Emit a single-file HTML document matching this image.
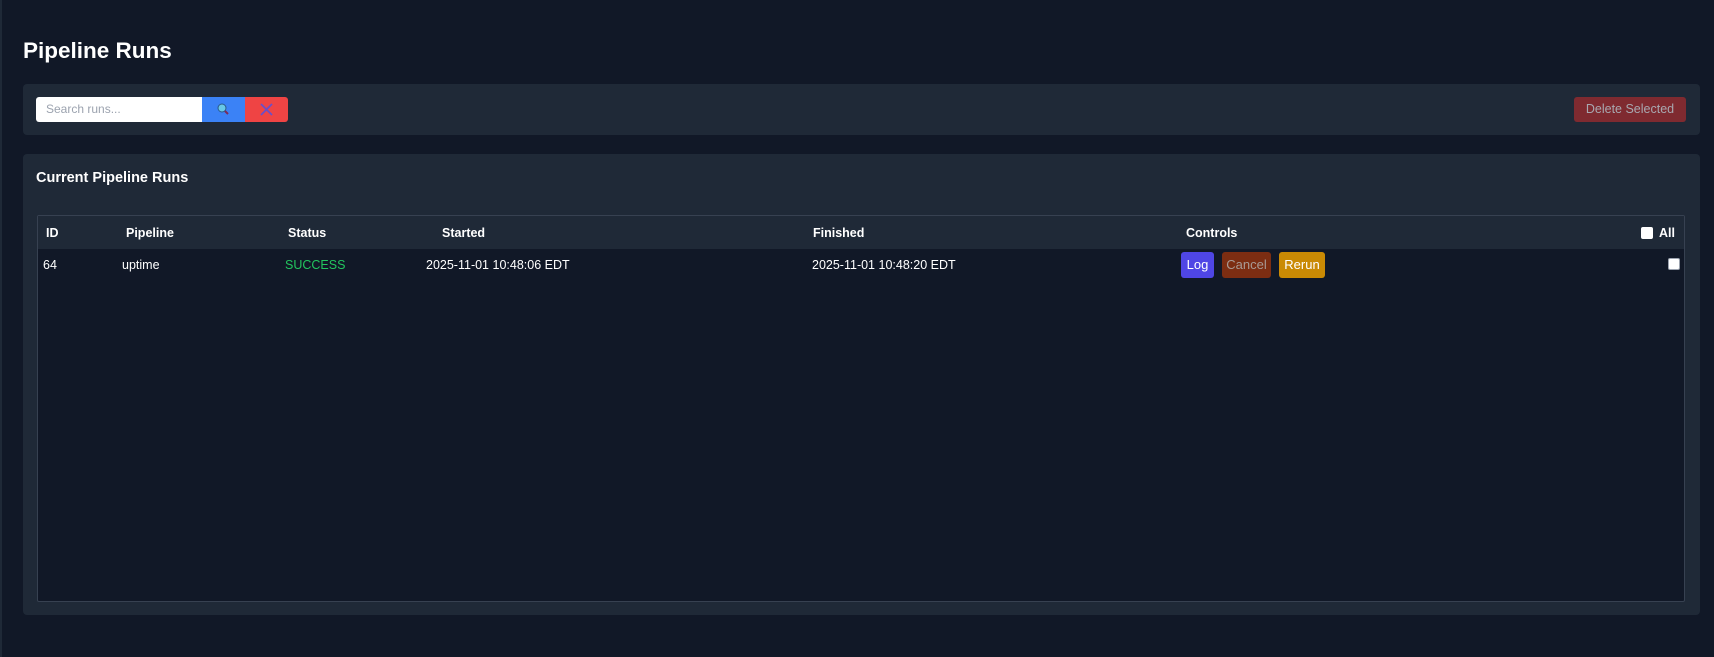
<!DOCTYPE html>
<html><head><style>
*{box-sizing:border-box;margin:0;padding:0}
body{width:1714px;height:657px;background:#111827;font-family:"Liberation Sans",sans-serif;color:#fff;position:relative;overflow:hidden;border-left:2px solid #1f2937}
h1{position:absolute;left:21px;top:38px;font-size:22.5px;font-weight:bold}
.card{position:absolute;left:21px;width:1677px;background:#1f2937;border-radius:4px}
.abs{position:absolute}
.in{left:13px;top:13px;width:166px;height:25px;background:#fff;border-radius:3px 0 0 3px;color:#9ca3af;font-size:12px;line-height:25px;padding-left:10px}
.btn{position:absolute;border-radius:3px;font-size:13px;text-align:center;line-height:26px;height:26px}
th,td{position:absolute;font-size:12.5px;white-space:nowrap}
th{font-weight:bold;top:10px}
</style></head><body>
<h1>Pipeline Runs</h1>
<div class="card" style="top:84px;height:51px">
 <div class="abs in">Search runs...</div>
 <div class="abs" style="left:179px;top:13px;width:43px;height:25px;background:#3b82f6">
  <svg width="43" height="25"><circle cx="20" cy="11" r="4" fill="#67c8e8" stroke="#2b5a8a" stroke-width="1"/><line x1="23" y1="14" x2="26" y2="17" stroke="#7a2c5a" stroke-width="2"/></svg></div>
 <div class="abs" style="left:222px;top:13px;width:43px;height:25px;background:#ef4444;border-radius:0 3px 3px 0">
  <svg width="43" height="25"><path d="M16 7L27 18M27 7L16 18" stroke="#6a4fc8" stroke-width="1.8"/></svg></div>
 <div class="btn" style="left:1551px;top:13px;width:112px;height:25px;line-height:25px;background:#7f2a30;color:#a8a8b0;font-size:12.5px">Delete Selected</div>
</div>
<div class="card" style="top:154px;height:461px">
 <div class="abs" style="left:13px;top:16px;font-size:14.5px;font-weight:bold">Current Pipeline Runs</div>
 <div class="abs" style="left:14px;top:61px;width:1648px;height:387px;border:1px solid #374151;background:#111827;border-radius:2px">
  <div class="abs" style="left:0;top:0;width:1646px;height:33px;background:#1f2937"></div>
  <table><tr>
   <th style="left:8px">ID</th><th style="left:88px">Pipeline</th><th style="left:250px">Status</th><th style="left:404px">Started</th><th style="left:775px">Finished</th><th style="left:1148px">Controls</th>
   <th style="left:1603px;top:10px"><span style="display:inline-block;width:12px;height:12px;background:#fff;border-radius:2px;vertical-align:-2px;margin-right:6px"></span>All</th>
  </tr><tr>
   <td style="left:5px;top:42px">64</td><td style="left:84px;top:42px">uptime</td><td style="left:247px;top:42px;color:#22c55e">SUCCESS</td><td style="left:388px;top:42px">2025-11-01 10:48:06 EDT</td><td style="left:774px;top:42px">2025-11-01 10:48:20 EDT</td>
  </tr></table>
  <div class="btn" style="left:1143px;top:36px;width:33px;background:#4f46e5">Log</div>
  <div class="btn" style="left:1184px;top:36px;width:49px;background:#7c2d12;color:#a89a94">Cancel</div>
  <div class="btn" style="left:1241px;top:36px;width:46px;background:#ca8a04">Rerun</div>
  <div class="abs" style="left:1630px;top:42px;width:12px;height:12px;background:#fff;border:1px solid #9ca3af;border-radius:2px"></div>
 </div>
</div>
</body></html>
